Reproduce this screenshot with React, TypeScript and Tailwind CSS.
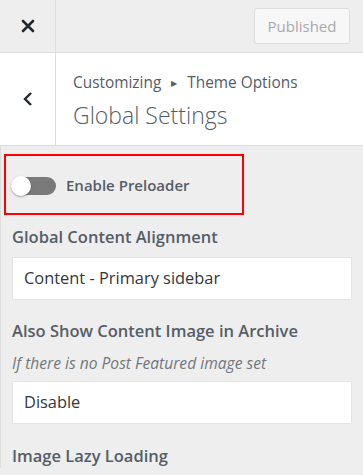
import React from 'react';

const font = { fontFamily: '"Open Sans", "Noto Sans", sans-serif' };

function Toggle() {
  return (
    <div className="relative h-[18px] w-[44px] shrink-0 rounded-full bg-[#7a7a7a]">
      <span className="absolute left-[-1px] top-[-1px] h-5 w-5 rounded-full bg-white shadow-[0_1px_2px_rgba(0,0,0,0.35)]" />
    </div>
  );
}

function SelectBox({ value }: { value: string }) {
  return (
    <div className="flex h-[43px] items-center border border-[#e2e4e7] bg-white px-[11px] text-[16.4px] text-[#32373c]">
      {value}
    </div>
  );
}

export default function App() {
  return (
    <div className="h-[475px] w-[363px] overflow-hidden bg-[#eeeeee]" style={font}>
      {/* Top bar */}
      <div className="flex h-[53px] border-b border-[#dddddd]">
        <div className="flex w-[56px] items-center justify-center border-r border-[#dddddd]">
          <svg width="14" height="14" viewBox="0 0 14 14">
            <path d="M2 2 L12 12 M12 2 L2 12" stroke="#23282d" strokeWidth="2.6" strokeLinecap="round" />
          </svg>
        </div>
        <div className="flex flex-1 items-center justify-end pr-[13px]">
          <div className="flex h-[36px] w-[96px] items-center justify-center rounded-[3px] border border-[#dddddd] bg-[#f7f7f7] text-[15px] text-[#a7aaad]">
            Published
          </div>
        </div>
      </div>

      {/* Section header */}
      <div className="flex h-[93px] border-b border-[#dddddd] bg-white">
        <div className="flex w-[56px] items-center justify-center border-r border-[#dddddd]">
          <svg width="12" height="16" viewBox="0 0 12 16">
            <path d="M9 2 L3 8 L9 14" fill="none" stroke="#23282d" strokeWidth="2.4" />
          </svg>
        </div>
        <div className="flex flex-col pl-[17px] pt-[20px]">
          <div className="flex items-center text-[15.4px] leading-[20px] text-[#555d66]">
            Customizing
            <span className="mx-[10px] text-[8px]">▶</span>
            Theme Options
          </div>
          <div className="mt-[6px] text-[23px] font-light leading-[32px] text-[#555d66]">Global Settings</div>
        </div>
      </div>

      {/* Controls */}
      <div className="border-l border-[#dddddd] pt-[8px]">
        <div className="ml-[3px] flex h-[61px] w-[240px] items-center gap-[10px] border-2 border-[#ff0000] pl-[6px] pt-[2px]">
          <Toggle />
          <span className="text-[15px] font-semibold text-[#555d66]">Enable Preloader</span>
        </div>

        <div className="px-[11px]">
          <div className="mt-[10px] mb-[8px] text-[16.5px] font-semibold leading-[24px] text-[#555d66]">Global Content Alignment</div>
          <SelectBox value="Content - Primary sidebar" />

          <div className="mt-[19px] text-[16.5px] font-semibold leading-[24px] text-[#555d66]">Also Show Content Image in Archive</div>
          <div className="mt-[10px] mb-[8px] text-[15.6px] italic leading-[20px] text-[#72777c]">If there is no Post Featured image set</div>
          <SelectBox value="Disable" />

          <div className="mt-[20px] text-[16.5px] font-semibold leading-[24px] text-[#555d66]">Image Lazy Loading</div>
        </div>
      </div>
    </div>
  );
}
